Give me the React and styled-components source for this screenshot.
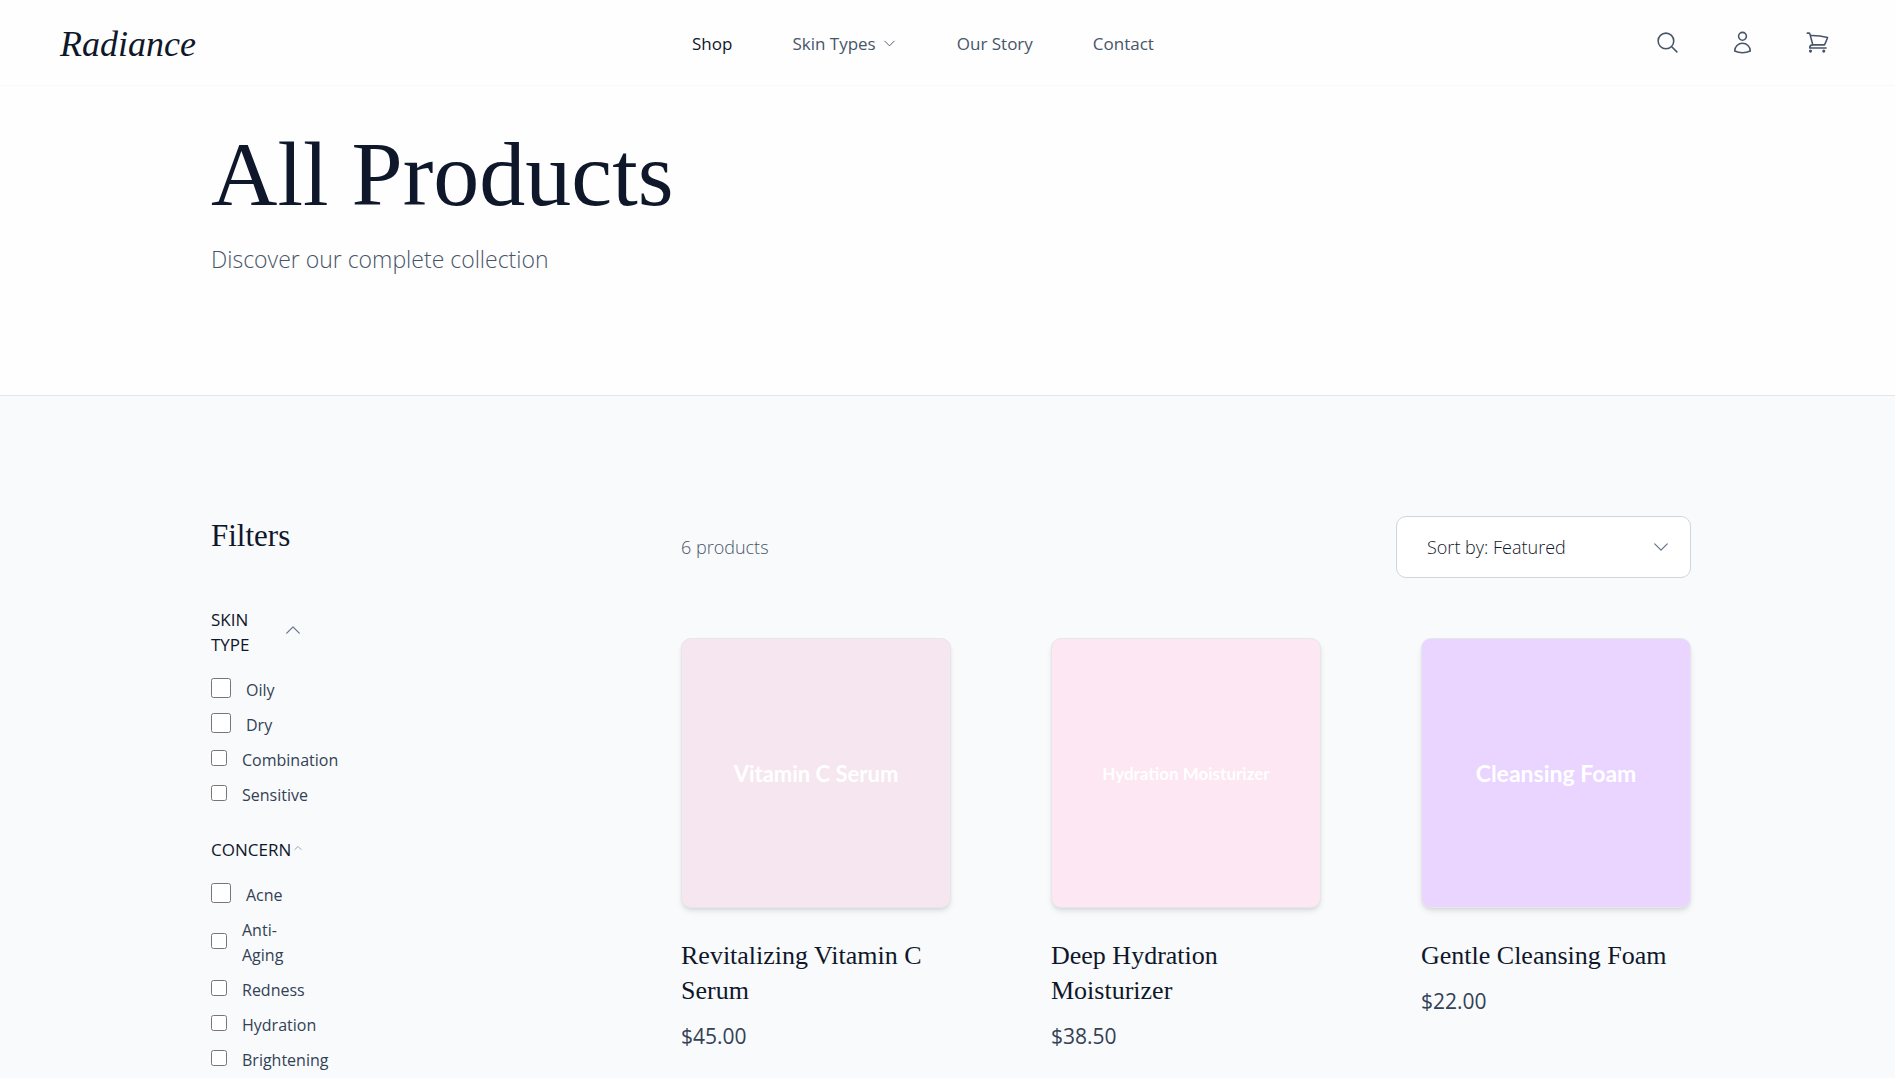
import { useState } from 'react'
import styled, { createGlobalStyle } from 'styled-components'

const GlobalStyle = createGlobalStyle`
  * {
    box-sizing: border-box;
  }
  body {
    margin: 0;
    background-color: #f9fafc;
    color: #0f172a;
    font-family: "Open Sans", "Noto Sans", sans-serif;
  }
`

const Page = styled.div`
    min-height: 100vh;
`

const Svg = styled.svg`
    display: block;
    fill: none;
    stroke: currentColor;
    stroke-width: 1.5;
    stroke-linecap: round;
    stroke-linejoin: round;
`

const Header = styled.header`
    display: flex;
    justify-content: space-between;
    align-items: center;
    height: 86px;
    padding: 0 60px;
    background-color: #fefefe;
    border-bottom: 1px solid #f8f9fb;
`

const Logo = styled.a`
    padding-top: 2px;
    font-family: "Liberation Serif", serif;
    font-size: 36px;
    font-style: italic;
    line-height: 40px;
    color: #0f172a;
    text-decoration: none;
`

const Nav = styled.nav`
    display: flex;
    align-items: center;
    gap: 60px;
    padding-top: 2px;
`

const NavLink = styled.a`
    font-size: 17px;
    line-height: 25px;
    color: ${({ $active }) => $active ? '#0f172a' : '#475569'};
    text-decoration: none;
`

const NavButton = styled.button`
    display: flex;
    align-items: center;
    gap: 6px;
    padding: 0;
    border: none;
    background: none;
    font-family: inherit;
    font-size: 17px;
    line-height: 25px;
    color: #475569;
    cursor: pointer;
`

const Actions = styled.div`
    display: flex;
    gap: 40px;
`

const IconButton = styled.button`
    padding: 5px;
    border: none;
    background: none;
    color: #475569;
    cursor: pointer;
`

const Hero = styled.section`
    padding: 40px 204px 118px 211px;
    background-color: #fefefe;
    border-bottom: 1px solid #e2e5ea;
`

const Title = styled.h1`
    margin: 0;
    font-family: "Liberation Serif", serif;
    font-size: 92px;
    font-weight: 400;
    line-height: 96px;
`

const Subtitle = styled.p`
    margin: 19px 0 0;
    font-size: 23px;
    font-weight: 300;
    line-height: 36px;
    color: #475569;
`

const Main = styled.main`
    display: grid;
    grid-template-columns: 370px 1fr;
    column-gap: 100px;
    padding: 120px 204px 0 211px;
`

const Sidebar = styled.aside`
    display: flex;
    flex-direction: column;
    gap: 29px;
`

const SidebarTitle = styled.h2`
    margin: 0 0 22px;
    font-family: "Liberation Serif", serif;
    font-size: 31px;
    font-weight: 400;
    line-height: 40px;
`

const Group = styled.div`
    width: 92px;
`

const GroupButton = styled.button`
    display: flex;
    justify-content: space-between;
    align-items: center;
    width: 100%;
    padding: 0;
    border: none;
    background: none;
    font-family: inherit;
    font-size: 17px;
    line-height: 25px;
    text-align: left;
    color: #0f172a;
    cursor: pointer;
    svg {
        flex-shrink: 0;
        margin-bottom: 4px;
        color: #64748b;
    }
`

const Options = styled.div`
    display: flex;
    flex-direction: column;
    gap: 10px;
    margin-top: 21px;
`

const Option = styled.label`
    display: flex;
    align-items: center;
    gap: 15px;
    font-size: 16px;
    line-height: 25px;
    color: #334155;
    cursor: pointer;
`

const Checkbox = styled.input`
    flex-shrink: 0;
    width: ${({ $big }) => $big ? '20px' : '16px'};
    height: ${({ $big }) => $big ? '20px' : '16px'};
    margin: 0 0 5px;
`

const Toolbar = styled.div`
    display: flex;
    justify-content: space-between;
    align-items: center;
    margin-bottom: 60px;
`

const Count = styled.p`
    margin: 0;
    font-size: 18px;
    font-weight: 300;
    line-height: 30px;
    color: #475569;
`

const SelectBox = styled.div`
    display: grid;
    align-items: center;
    width: 295px;
    svg {
        grid-area: 1 / 1;
        justify-self: end;
        margin-right: 20px;
        color: #64748b;
        pointer-events: none;
    }
`

const Select = styled.select`
    grid-area: 1 / 1;
    appearance: none;
    width: 100%;
    height: 62px;
    padding: 0 50px 0 30px;
    border: 1px solid #d1d5db;
    border-radius: 10px;
    background-color: #ffffff;
    font-family: inherit;
    font-size: 18px;
    font-weight: 300;
    color: #0f172a;
`

const Grid = styled.div`
    display: grid;
    grid-template-columns: repeat(3, 1fr);
    gap: 100px;
`

const Picture = styled.div`
    display: flex;
    justify-content: center;
    align-items: center;
    aspect-ratio: 1;
    border: 1px solid #e5e7eb;
    border-radius: 10px;
    background-color: ${({ $color }) => $color};
    box-shadow: 0 4px 6px -1px rgba(0, 0, 0, 0.1), 0 2px 4px -2px rgba(0, 0, 0, 0.1);
    font-family: Lato, sans-serif;
    font-size: ${({ $size }) => $size}px;
    font-weight: 700;
    color: #ffffff;
`

const ProductName = styled.h3`
    margin: 30px 0 0;
    font-family: "Liberation Serif", serif;
    font-size: 26px;
    font-weight: 400;
    line-height: 35px;
`

const Price = styled.p`
    margin: 13px 0 0;
    font-size: 21px;
    line-height: 30px;
    color: #334155;
`

const ICONS = {
    search: 'M21 21l-5.197-5.197m0 0A7.5 7.5 0 105.196 5.196a7.5 7.5 0 0010.607 10.607z',
    user: 'M15.75 6a3.75 3.75 0 11-7.5 0 3.75 3.75 0 017.5 0zM4.501 20.118a7.5 7.5 0 0114.998 0A17.933 17.933 0 0112 21.75c-2.676 0-5.216-.584-7.499-1.632z',
    cart: 'M2.25 3h1.386c.51 0 .955.343 1.087.835l.383 1.437M7.5 14.25a3 3 0 00-3 3h15.75m-12.75-3h11.218c1.121-2.3 2.1-4.684 2.924-7.138a60.114 60.114 0 00-16.536-1.84M7.5 14.25L5.106 5.272M6 20.25a.75.75 0 11-1.5 0 .75.75 0 011.5 0zm12.75 0a.75.75 0 11-1.5 0 .75.75 0 011.5 0z',
    down: 'M19.5 8.25l-7.5 7.5-7.5-7.5',
    up: 'M4.5 15.75l7.5-7.5 7.5 7.5',
}

const FILTERS = [
    {
        id: 'skin',
        name: 'SKIN TYPE',
        icon: 20,
        options: [
            { name: 'Oily', big: true },
            { name: 'Dry', big: true },
            { name: 'Combination' },
            { name: 'Sensitive' },
        ],
    },
    {
        id: 'concern',
        name: 'CONCERN',
        icon: 10,
        options: [
            { name: 'Acne', big: true },
            { name: 'Anti-Aging' },
            { name: 'Redness' },
            { name: 'Hydration' },
            { name: 'Brightening' },
        ],
    },
]

const PRODUCTS = [
    { id: 1, label: 'Vitamin C Serum', size: 22, color: '#f5e6f0', name: 'Revitalizing Vitamin C Serum', price: '$45.00' },
    { id: 2, label: 'Hydration Moisturizer', size: 17, color: '#fce7f3', name: 'Deep Hydration Moisturizer', price: '$38.50' },
    { id: 3, label: 'Cleansing Foam', size: 23, color: '#e9d5ff', name: 'Gentle Cleansing Foam', price: '$22.00' },
]

const Icon = ({ name, size }) => (
    <Svg viewBox="0 0 24 24" width={size} height={size} aria-hidden="true">
        <path d={ICONS[name]} />
    </Svg>
)

const FilterGroup = ({ group }) => {
    const [open, setOpen] = useState(true)

    return <Group>
        <GroupButton type="button" aria-expanded={open} onClick={() => setOpen(!open)}>
            <span>{group.name}</span>
            <Icon name={open ? 'up' : 'down'} size={group.icon} />
        </GroupButton>
        {open && <Options>
            {group.options.map((option) => <Option key={option.name}>
                <Checkbox type="checkbox" $big={option.big} />
                <span>{option.name}</span>
            </Option>)}
        </Options>}
    </Group>
}

const App = () => {
    return <Page>
        <GlobalStyle />
        <Header>
            <Logo href="#">Radiance</Logo>
            <Nav>
                <NavLink href="#" $active>Shop</NavLink>
                <NavButton type="button">
                    Skin Types
                    <Icon name="down" size={15} />
                </NavButton>
                <NavLink href="#">Our Story</NavLink>
                <NavLink href="#">Contact</NavLink>
            </Nav>
            <Actions>
                <IconButton type="button" aria-label="Search"><Icon name="search" size={25} /></IconButton>
                <IconButton type="button" aria-label="Account"><Icon name="user" size={25} /></IconButton>
                <IconButton type="button" aria-label="Cart"><Icon name="cart" size={25} /></IconButton>
            </Actions>
        </Header>
        <Hero>
            <Title>All Products</Title>
            <Subtitle>Discover our complete collection</Subtitle>
        </Hero>
        <Main>
            <Sidebar>
                <SidebarTitle>Filters</SidebarTitle>
                {FILTERS.map((group) => <FilterGroup key={group.id} group={group} />)}
            </Sidebar>
            <section>
                <Toolbar>
                    <Count>6 products</Count>
                    <SelectBox>
                        <Select aria-label="Sort products" defaultValue="featured">
                            <option value="featured">Sort by: Featured</option>
                            <option value="low">Price: Low to High</option>
                            <option value="high">Price: High to Low</option>
                        </Select>
                        <Icon name="down" size={20} />
                    </SelectBox>
                </Toolbar>
                <Grid>
                    {PRODUCTS.map((product) => <article key={product.id}>
                        <Picture $color={product.color} $size={product.size}>{product.label}</Picture>
                        <ProductName>{product.name}</ProductName>
                        <Price>{product.price}</Price>
                    </article>)}
                </Grid>
            </section>
        </Main>
    </Page>
}
export default App
